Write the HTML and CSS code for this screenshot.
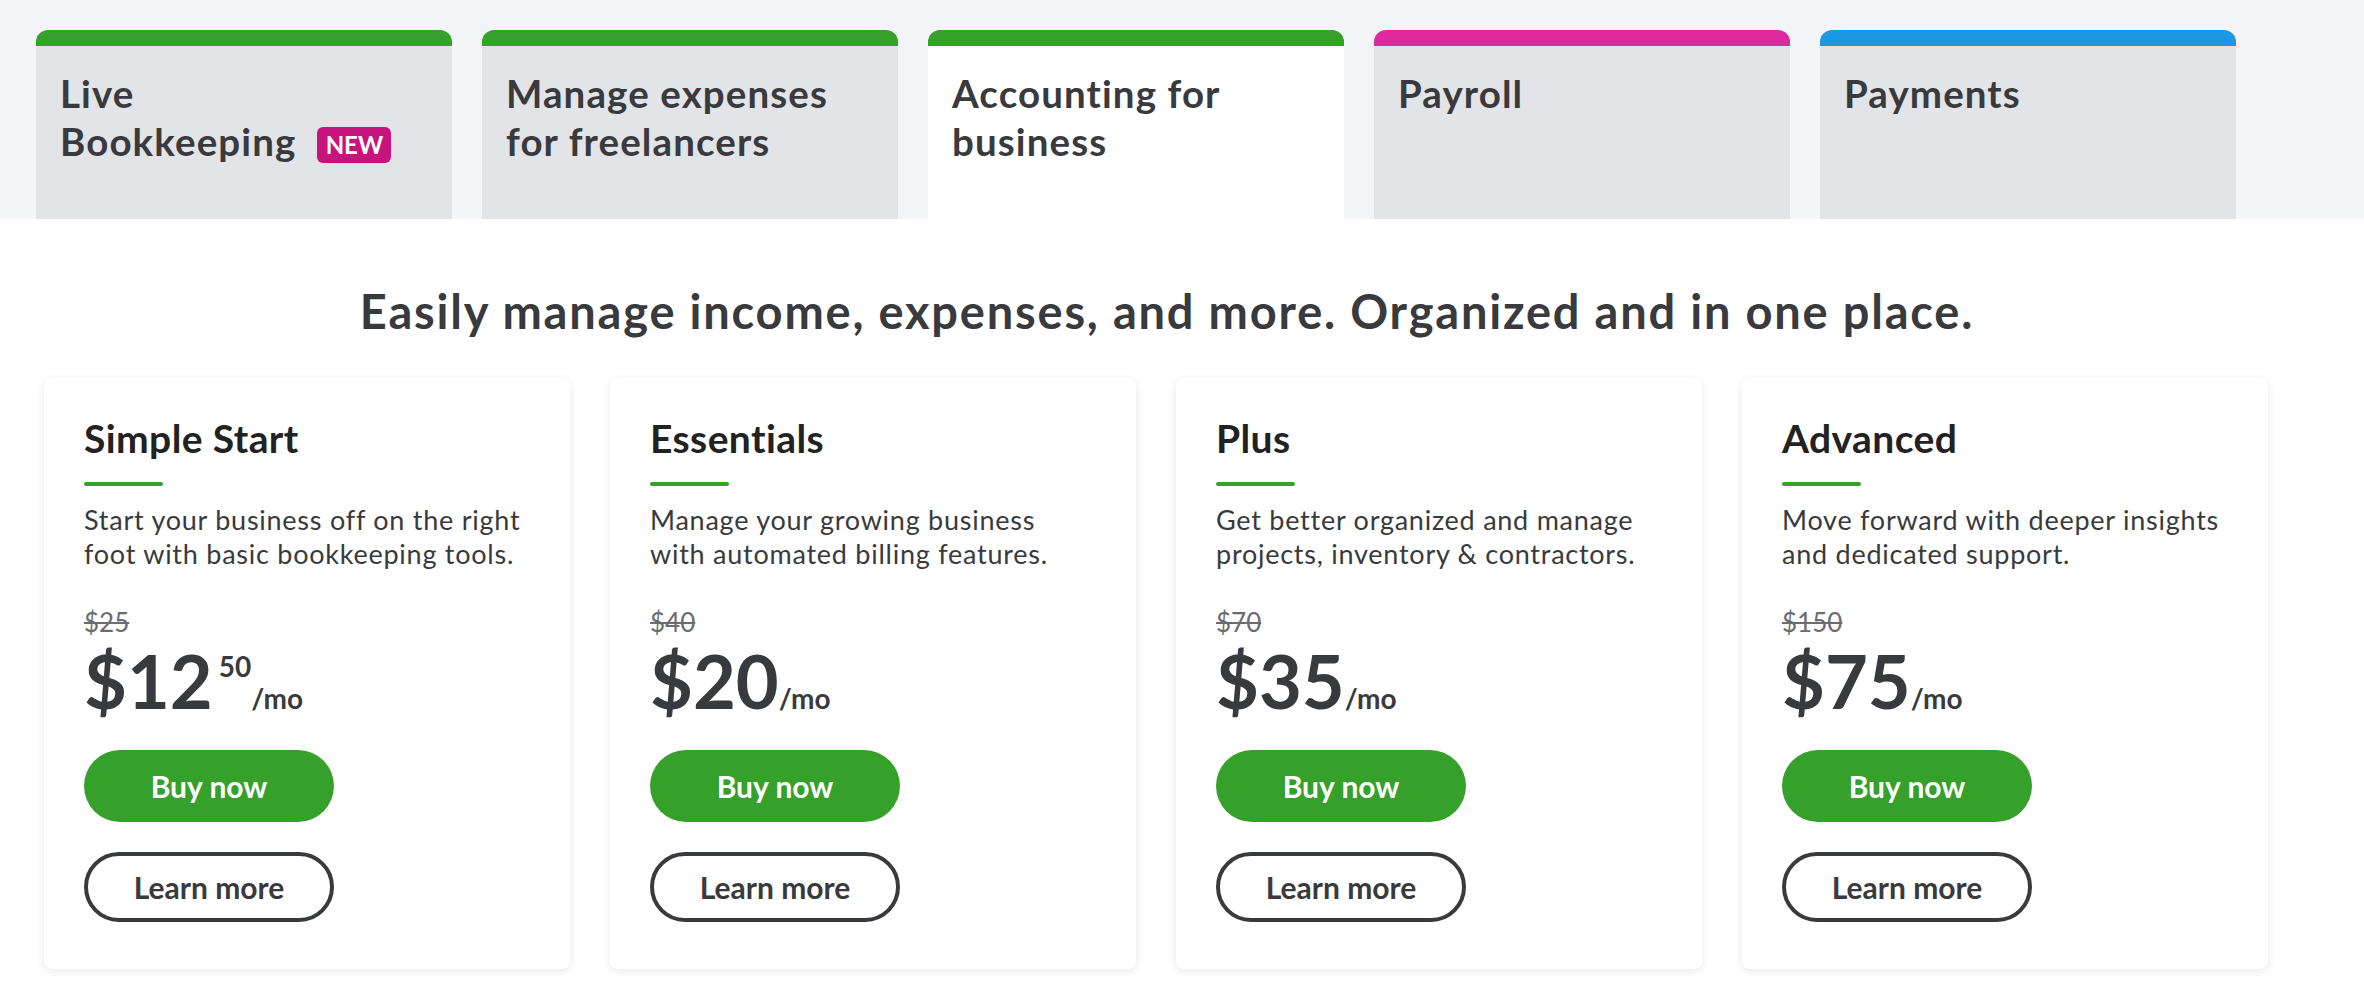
FILE: index.html
```html
<!DOCTYPE html>
<html lang="en">
<head>
<meta charset="utf-8">
<title>Pricing</title>
<link rel="stylesheet" href="styles.css">
</head>
<body>
<div class="tab-band">
  <div class="tab tab-green"><div class="tab-label">Live<br>Bookkeeping<span class="badge">NEW</span></div></div>
  <div class="tab tab-green"><div class="tab-label">Manage expenses<br>for freelancers</div></div>
  <div class="tab tab-green tab-active"><div class="tab-label">Accounting for<br>business</div></div>
  <div class="tab tab-pink"><div class="tab-label">Payroll</div></div>
  <div class="tab tab-blue"><div class="tab-label">Payments</div></div>
</div>
<main class="content">
  <h1 class="headline">Easily manage income, expenses, and more. Organized and in one place.</h1>
  <div class="cards">
    <div class="card">
      <h2 class="card-title">Simple Start</h2>
      <div class="rule"></div>
      <p class="desc">Start your business off on the right<br>foot with basic bookkeeping tools.</p>
      <div class="old-price">$25</div>
      <div class="price"><span class="amount">$12</span><span class="cents">50</span><span class="per">/mo</span></div>
      <a class="btn btn-buy">Buy now</a>
      <a class="btn btn-learn">Learn more</a>
    </div>
    <div class="card">
      <h2 class="card-title">Essentials</h2>
      <div class="rule"></div>
      <p class="desc">Manage your growing business<br>with automated billing features.</p>
      <div class="old-price">$40</div>
      <div class="price"><span class="amount">$20</span><span class="per">/mo</span></div>
      <a class="btn btn-buy">Buy now</a>
      <a class="btn btn-learn">Learn more</a>
    </div>
    <div class="card">
      <h2 class="card-title">Plus</h2>
      <div class="rule"></div>
      <p class="desc">Get better organized and manage<br>projects, inventory &amp; contractors.</p>
      <div class="old-price">$70</div>
      <div class="price"><span class="amount">$35</span><span class="per">/mo</span></div>
      <a class="btn btn-buy">Buy now</a>
      <a class="btn btn-learn">Learn more</a>
    </div>
    <div class="card">
      <h2 class="card-title">Advanced</h2>
      <div class="rule"></div>
      <p class="desc">Move forward with deeper insights<br>and dedicated support.</p>
      <div class="old-price">$150</div>
      <div class="price"><span class="amount">$75</span><span class="per">/mo</span></div>
      <a class="btn btn-buy">Buy now</a>
      <a class="btn btn-learn">Learn more</a>
    </div>
  </div>
</main>
</body>
</html>
```
FILE: styles.css
```css
* { box-sizing: border-box; }
html, body { margin: 0; padding: 0; background: #ffffff; }
body {
  font-family: Lato, "Liberation Sans", sans-serif;
  color: #393a3d;
  width: 2364px;
  height: 988px;
  overflow: hidden;
}

.tab-band {
  background: #f4f5f8;
  height: 219px;
  padding: 30px 0 0 36px;
  display: flex;
  gap: 30px;
}
.tab {
  width: 416px;
  height: 189px;
  background: #e3e4e8;
  border-top: 16px solid #35a02a;
  border-radius: 12px 12px 0 0;
  padding: 23px 24px 0 24px;
}
.tab-green { border-top-color: #35a02a; }
.tab-pink { border-top-color: #e0299c; }
.tab-blue { border-top-color: #1a99e2; }
.tab-active { background: #ffffff; }
.tab-label {
  font-size: 38.5px;
  line-height: 48px;
  font-weight: 700;
  color: #393a3d;
  letter-spacing: 1.1px;
}
.badge {
  display: inline-block;
  vertical-align: middle;
  margin-left: 21px;
  margin-top: -2px;
  background: #c8127c;
  color: #ffffff;
  font-size: 24px;
  line-height: 36px;
  height: 36px;
  width: 74px;
  text-align: center;
  border-radius: 6px;
  font-weight: 700;
  letter-spacing: 0;
}

.content {
  padding: 0 0 0 44px;
}
.headline {
  margin: 64px 0 0 0;
  width: 2224px;
  padding-left: 22px;
  text-align: center;
  font-size: 47px;
  line-height: 56px;
  font-weight: 700;
  color: #393a3d;
  letter-spacing: 1.8px;
}
.cards {
  margin-top: 39px;
  display: flex;
  gap: 40px;
}
.card {
  width: 526px;
  height: 591px;
  background: #ffffff;
  border-radius: 8px;
  box-shadow: 0 2px 10px rgba(0, 0, 0, 0.09);
  padding: 37px 40px 0 40px;
}
.card-title {
  margin: 0;
  font-size: 39px;
  line-height: 46px;
  font-weight: 700;
  color: #222223;
  letter-spacing: 0.4px;
}
.rule {
  margin-top: 21px;
  width: 79px;
  height: 4px;
  border-radius: 2px;
  background: #35a02a;
}
.desc {
  margin: 17px 0 0 0;
  font-size: 27px;
  line-height: 34px;
  color: #393a3d;
  letter-spacing: 0.75px;
}
.old-price {
  margin-top: 35px;
  font-size: 26px;
  line-height: 32px;
  color: #6b6c72;
  text-decoration: line-through;
}
.price {
  margin-top: 6px;
  height: 74px;
  line-height: 74px;
  white-space: nowrap;
}
.amount {
  font-size: 74px;
  font-weight: 700;
  color: #393a3d;
}
.cents {
  display: inline-block;
  vertical-align: top;
  font-size: 28px;
  line-height: 44px;
  font-weight: 700;
  margin-left: 6px;
}
.per {
  font-size: 28px;
  font-weight: 700;
}
.btn {
  display: flex;
  align-items: center;
  justify-content: center;
  width: 250px;
  border-radius: 40px;
  font-size: 30px;
  font-weight: 700;
  cursor: pointer;
}
.btn-buy {
  margin-top: 32px;
  height: 72px;
  background: #35a02a;
  color: #ffffff;
}
.btn-learn {
  margin-top: 30px;
  height: 70px;
  border: 4px solid #393a3d;
  color: #393a3d;
  background: #ffffff;
}
```
